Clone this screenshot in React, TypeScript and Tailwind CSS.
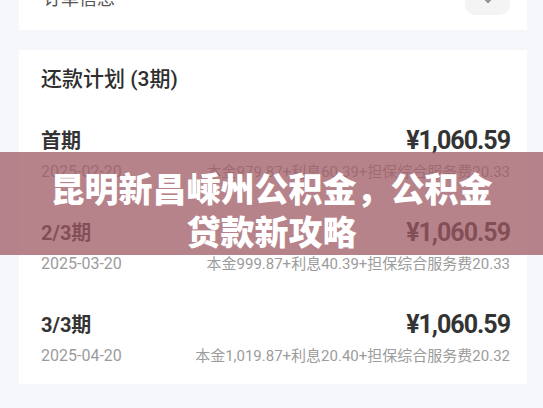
import React from "react";

const rows = [
  { t: "首期", d: "2025-02-20", detail: "本金979.87+利息60.39+担保综合服务费20.33" },
  { t: "2/3期", d: "2025-03-20", detail: "本金999.87+利息40.39+担保综合服务费20.33" },
  { t: "3/3期", d: "2025-04-20", detail: "本金1,019.87+利息20.40+担保综合服务费20.32" },
];

export default function App() {
  return (
    <div
      className="relative w-[543px] h-[408px] overflow-hidden bg-[#f6f7fb]"
      style={{ fontFamily: "Roboto, 'Noto Sans CJK SC', sans-serif" }}
    >
      <div className="ml-[19px] mr-[16px] -mt-[30px] h-[60px] bg-white flex justify-between items-start pl-[24px] pr-[17px]">
        <div className="mt-[17px] text-[18px] leading-[24px] text-[#555]">订单信息</div>
        <div className="w-[45px] h-[45px] rounded-[10px] bg-[#f4f4f4] flex items-end justify-center pb-[8px]">
          <svg width="16" height="16" viewBox="0 0 16 16" fill="none" stroke="#8a8a8a" strokeWidth="1.8" strokeLinecap="round" strokeLinejoin="round">
            <path d="M3 6l5 5 5-5" />
          </svg>
        </div>
      </div>

      <div className="mt-[20px] ml-[19px] mr-[16px] bg-white pl-[22px] pr-[17px] pt-[15px] pb-[18px] flex flex-col">
        <div className="h-[28px] leading-[28px] text-[21px] font-medium text-[#2e2e2e]">还款计划 (3期)</div>
        <div className="mt-[34px] flex flex-col gap-[37px]">
          {rows.map((r) => (
            <div key={r.t} className="flex flex-col">
              <div className="h-[28px] flex items-center justify-between">
                <span className="text-[20px] font-bold text-[#333]">{r.t}</span>
                <span className="text-[25px] font-bold tracking-[-1px] text-[#333]">¥1,060.59</span>
              </div>
              <div className="mt-[7px] h-[20px] flex items-center justify-between text-[#9c9c9c]">
                <span className="text-[16px]">{r.d}</span>
                <span className="text-[15px]">{r.detail}</span>
              </div>
            </div>
          ))}
        </div>
      </div>

      <div className="absolute left-0 right-0 top-[152px] h-[103px] bg-[rgba(159,90,100,0.75)] pt-[14px] flex flex-col items-center">
        <div
          className="text-white text-[34px] leading-[43px] font-black text-center"
          style={{ fontFamily: "'Noto Sans CJK SC', sans-serif" }}
        >
          <div>昆明新昌嵊州公积金，公积金</div>
          <div>贷款新攻略</div>
        </div>
      </div>
    </div>
  );
}
